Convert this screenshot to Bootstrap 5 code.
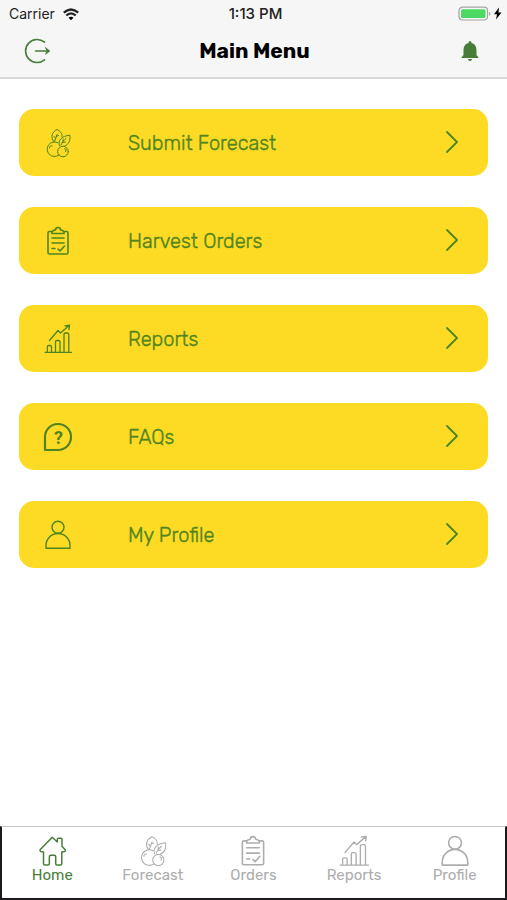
<!DOCTYPE html>
<html lang="en">
<head>
<meta charset="utf-8">
<meta name="viewport" content="width=device-width, initial-scale=1">
<title>Main Menu</title>
<link href="https://cdn.jsdelivr.net/npm/bootstrap@5.3.0/dist/css/bootstrap.min.css" rel="stylesheet">
<style>
  body { font-family: Rubik, Roboto, sans-serif; background: #fff; }
  svg { display: block; fill: none; stroke: currentColor; stroke-linecap: round; stroke-linejoin: round; flex: none; }
  .top-area { background: #f6f6f6; border-bottom: 2px solid #d8d8d8; }
  .status-row { font-family: Inter, sans-serif; font-size: 14px; line-height: 20px; padding: 4px 5px 4px 9px; color: #222; }
  .status-row > * { flex: 1 1 0; }
  .status-row .clock { font-size: 15px; font-weight: 500; }
  .title-row { height: 49px; padding: 0 24px 4px; }
  .title-row h1 { font-size: 21px; line-height: 28px; font-weight: 700; color: #000; }
  .green { color: #467d38; }
  .menu-list { padding: 30px 19px; gap: 31px; }
  .menu-item { background: #fddb24; color: #4f8420; border-radius: 15px; height: 67px; padding: 0 28px 0 23px; font-size: 20px; line-height: 28px; font-weight: 300; -webkit-text-stroke: .4px currentColor; }
  .menu-item:hover { background: #f7d41c; }
  .menu-item .item-label { margin-left: 54px; }
  .tab-bar { border: 2px solid #1c1a1c; border-top: 1px solid #c4c4c4; background: #fff; height: 74px; padding-top: 7px; }
  .tab-link { color: #adadad; font-size: 15px; line-height: 18px; }
  .tab-link.active { color: #467d38; }
  .tab-link .tab-label { margin-top: -2px; }
</style>
<script src="https://cdn.jsdelivr.net/npm/bootstrap@5.3.0/dist/js/bootstrap.bundle.min.js"></script>
</head>
<body class="d-flex flex-column min-vh-100">
<svg width="0" height="0" class="position-absolute" aria-hidden="true">
  <symbol id="i-berry" viewBox="0 0 32 32">
    <path d="M11.600 14.500C8.300 10 10 5 15 2.500C18.500 4 20.500 7 20 9.500M17.500 18.500C15.500 13.500 19.500 9 27.900 8.200C28.500 13.500 26.800 17.500 22.500 19.200M12.500 14.500C13.500 12 14.500 9.500 15 7.500M13.500 11.500L12 9.500M14.300 9.500L16.500 8.500M19 18C20 15 22 13 24 11.500M21 14.500V12M20.300 15.500L23.500 15"/>
    <path d="M16 15.800A7.300 7.300 0 1 0 16.800 28.100"/><circle cx="21" cy="24.500" r="5.300"/>
    <path d="M7.500 21C7.200 19.500 8.500 18.500 10 18.800M22.500 21.700L24.300 22.700L23.500 24.500"/>
  </symbol>
  <symbol id="i-orders" viewBox="0 0 32 32">
    <path d="M10 6.500H7.500Q6 6.500 6 8V27.500Q6 29 7.500 29H24.500Q26 29 26 27.500V8Q26 6.500 24.500 6.500H22"/>
    <path d="M10.500 8.500Q9.500 8.500 10 7Q11 5 13.500 5Q13.500 2.500 16 2.500T18.500 5Q21 5 22 7Q22.500 8.500 21.500 8.500Z"/>
    <path d="M10 13H22M10 18H22M10 23.500H13M16 24L18 26L22.500 21"/>
  </symbol>
  <symbol id="i-reports" viewBox="0 0 32 32">
    <path d="M3 29.300H29.500M5.300 29V24Q5.300 22.500 6.800 22.500H8Q9.500 22.500 9.500 24V29M13.500 29V19Q13.500 17.500 15 17.500H16.500Q18 17.500 18 19V29M22 29V11.500Q22 10 23.500 10H25.300Q26.800 10 26.800 11.500V29"/>
    <path d="M7.500 17.500L16 7.500L18.500 10L26.500 3M23 2.800L27.500 2.200L27 6.500"/>
  </symbol>
  <symbol id="i-profile" viewBox="0 0 32 32">
    <circle cx="16" cy="8.300" r="6"/><path d="M4 29.300V26.500A12 12 0 0 1 28 26.500V29.300Z"/>
  </symbol>
  <symbol id="i-home" viewBox="0 0 32 32">
    <path d="M16.200 3L4.800 14.800Q4.300 15.700 5.300 16.500L8 17V28Q8 29.200 9.200 29.200H12.300Q13.500 29.200 13.500 28V21.500Q13.500 20 15 20H18Q19.500 20 19.500 21.500V28Q19.500 29.200 20.700 29.200H24Q25.200 29.200 25.200 28V17L28 16.500Q29 15.700 28.400 14.800L25.400 11.500V5Q25.400 4 24.400 4H22Q21 4 21 5V7.500Z"/>
  </symbol>
  <symbol id="i-next" viewBox="0 0 16 24"><path d="M3 1L13 11L3 21"/></symbol>
</svg>

<header class="top-area">
  <div class="status-row d-flex align-items-center">
    <div class="d-flex align-items-center gap-2">
      <span>Carrier</span>
      <svg width="16" height="13" viewBox="0 0 16 13" stroke="#000" stroke-width="2.300"><path stroke-linecap="butt" d="M.8 4.700Q8-1.700 15.200 4.700M3.300 7.500Q8 3.200 12.700 7.500"/><path d="M5.500 9.700Q8 7.700 10.500 9.700L8 12.300Z" fill="#000" stroke="none"/></svg>
    </div>
    <div class="clock text-center">1:13 PM</div>
    <div class="d-flex justify-content-end">
      <svg width="44" height="16" viewBox="0 0 44 16"><rect x="1" y="1.200" width="28.500" height="12.800" rx="3.500" stroke="#a5a5a5" stroke-width="1.200"/><rect x="3" y="3.200" width="24.500" height="8.800" rx="1.500" fill="#4bd964" stroke="none"/><path d="M31 5.700V9.700Q32.500 9.200 32.500 7.700T31 5.700Z" fill="#a5a5a5" stroke="none"/><path d="M41 1.500L36 8.300H39L38 13.500L43.500 6.500H40.500Z" fill="#000" stroke="none"/></svg>
    </div>
  </div>
  <div class="title-row d-flex align-items-center justify-content-between">
    <button type="button" class="btn p-0 border-0 green" aria-label="Log out">
      <svg width="28" height="28" viewBox="0 0 28 28" stroke-width="1.600"><path d="M20.500 5.200A11.500 11.500 0 1 0 20.500 22.800M11.500 14H24"/><path d="M21.500 10.500L26 14L21.500 17.500L22.500 14Z" fill="currentColor" stroke-width=".5"/></svg>
    </button>
    <h1 class="m-0">Main Menu</h1>
    <button type="button" class="btn p-0 border-0 green" aria-label="Notifications">
      <svg width="26" height="24" viewBox="0 0 26 24"><path d="M13 2Q14.500 2 14.500 4C18.500 5 19.500 8 19.500 12V16L21.500 18.500V19H4.500V18.500L6.500 16V12C6.500 8 7.500 5 11.500 4Q11.500 2 13 2ZM10.800 20H15.200Q14.800 22 13 22T10.800 20Z" fill="currentColor" stroke="none"/></svg>
    </button>
  </div>
</header>

<main class="menu-list d-flex flex-column">
  <a href="#forecast" class="menu-item d-flex align-items-center text-decoration-none">
    <svg width="32" height="32" stroke-width="1"><use href="#i-berry"/></svg><span class="item-label flex-grow-1">Submit Forecast</span><svg width="16" height="24" stroke-width="1.800"><use href="#i-next"/></svg></a>
  <a href="#orders" class="menu-item d-flex align-items-center text-decoration-none">
    <svg width="32" height="32" stroke-width="1.600"><use href="#i-orders"/></svg><span class="item-label flex-grow-1">Harvest Orders</span><svg width="16" height="24" stroke-width="1.800"><use href="#i-next"/></svg></a>
  <a href="#reports" class="menu-item d-flex align-items-center text-decoration-none">
    <svg width="32" height="32" stroke-width="1.300"><use href="#i-reports"/></svg><span class="item-label flex-grow-1">Reports</span><svg width="16" height="24" stroke-width="1.800"><use href="#i-next"/></svg></a>
  <a href="#faqs" class="menu-item d-flex align-items-center text-decoration-none">
    <svg width="32" height="32" viewBox="0 0 32 32" stroke-width="2.200"><path d="M3 29V16A13 13 0 1 1 16 29Z"/><text x="16.500" y="22.500" text-anchor="middle" font-family="Roboto" font-size="18" font-weight="700" fill="currentColor" stroke="none">?</text></svg><span class="item-label flex-grow-1">FAQs</span><svg width="16" height="24" stroke-width="1.800"><use href="#i-next"/></svg></a>
  <a href="#profile" class="menu-item d-flex align-items-center text-decoration-none">
    <svg width="32" height="32" stroke-width="1.400"><use href="#i-profile"/></svg><span class="item-label flex-grow-1">My Profile</span><svg width="16" height="24" stroke-width="1.800"><use href="#i-next"/></svg></a>
</main>

<nav class="tab-bar d-flex mt-auto" aria-label="Main">
  <a href="#home" class="tab-link active col d-flex flex-column align-items-center text-decoration-none" aria-current="page"><svg width="34" height="34" stroke-width="1.400"><use href="#i-home"/></svg><span class="tab-label">Home</span></a>
  <a href="#forecast" class="tab-link col d-flex flex-column align-items-center text-decoration-none"><svg width="34" height="34" stroke-width="1"><use href="#i-berry"/></svg><span class="tab-label">Forecast</span></a>
  <a href="#orders" class="tab-link col d-flex flex-column align-items-center text-decoration-none"><svg width="34" height="34" stroke-width="1.500"><use href="#i-orders"/></svg><span class="tab-label">Orders</span></a>
  <a href="#reports" class="tab-link col d-flex flex-column align-items-center text-decoration-none"><svg width="34" height="34" stroke-width="1.300"><use href="#i-reports"/></svg><span class="tab-label">Reports</span></a>
  <a href="#profile" class="tab-link col d-flex flex-column align-items-center text-decoration-none"><svg width="34" height="34" stroke-width="1.500"><use href="#i-profile"/></svg><span class="tab-label">Profile</span></a>
</nav>
</body>
</html>
